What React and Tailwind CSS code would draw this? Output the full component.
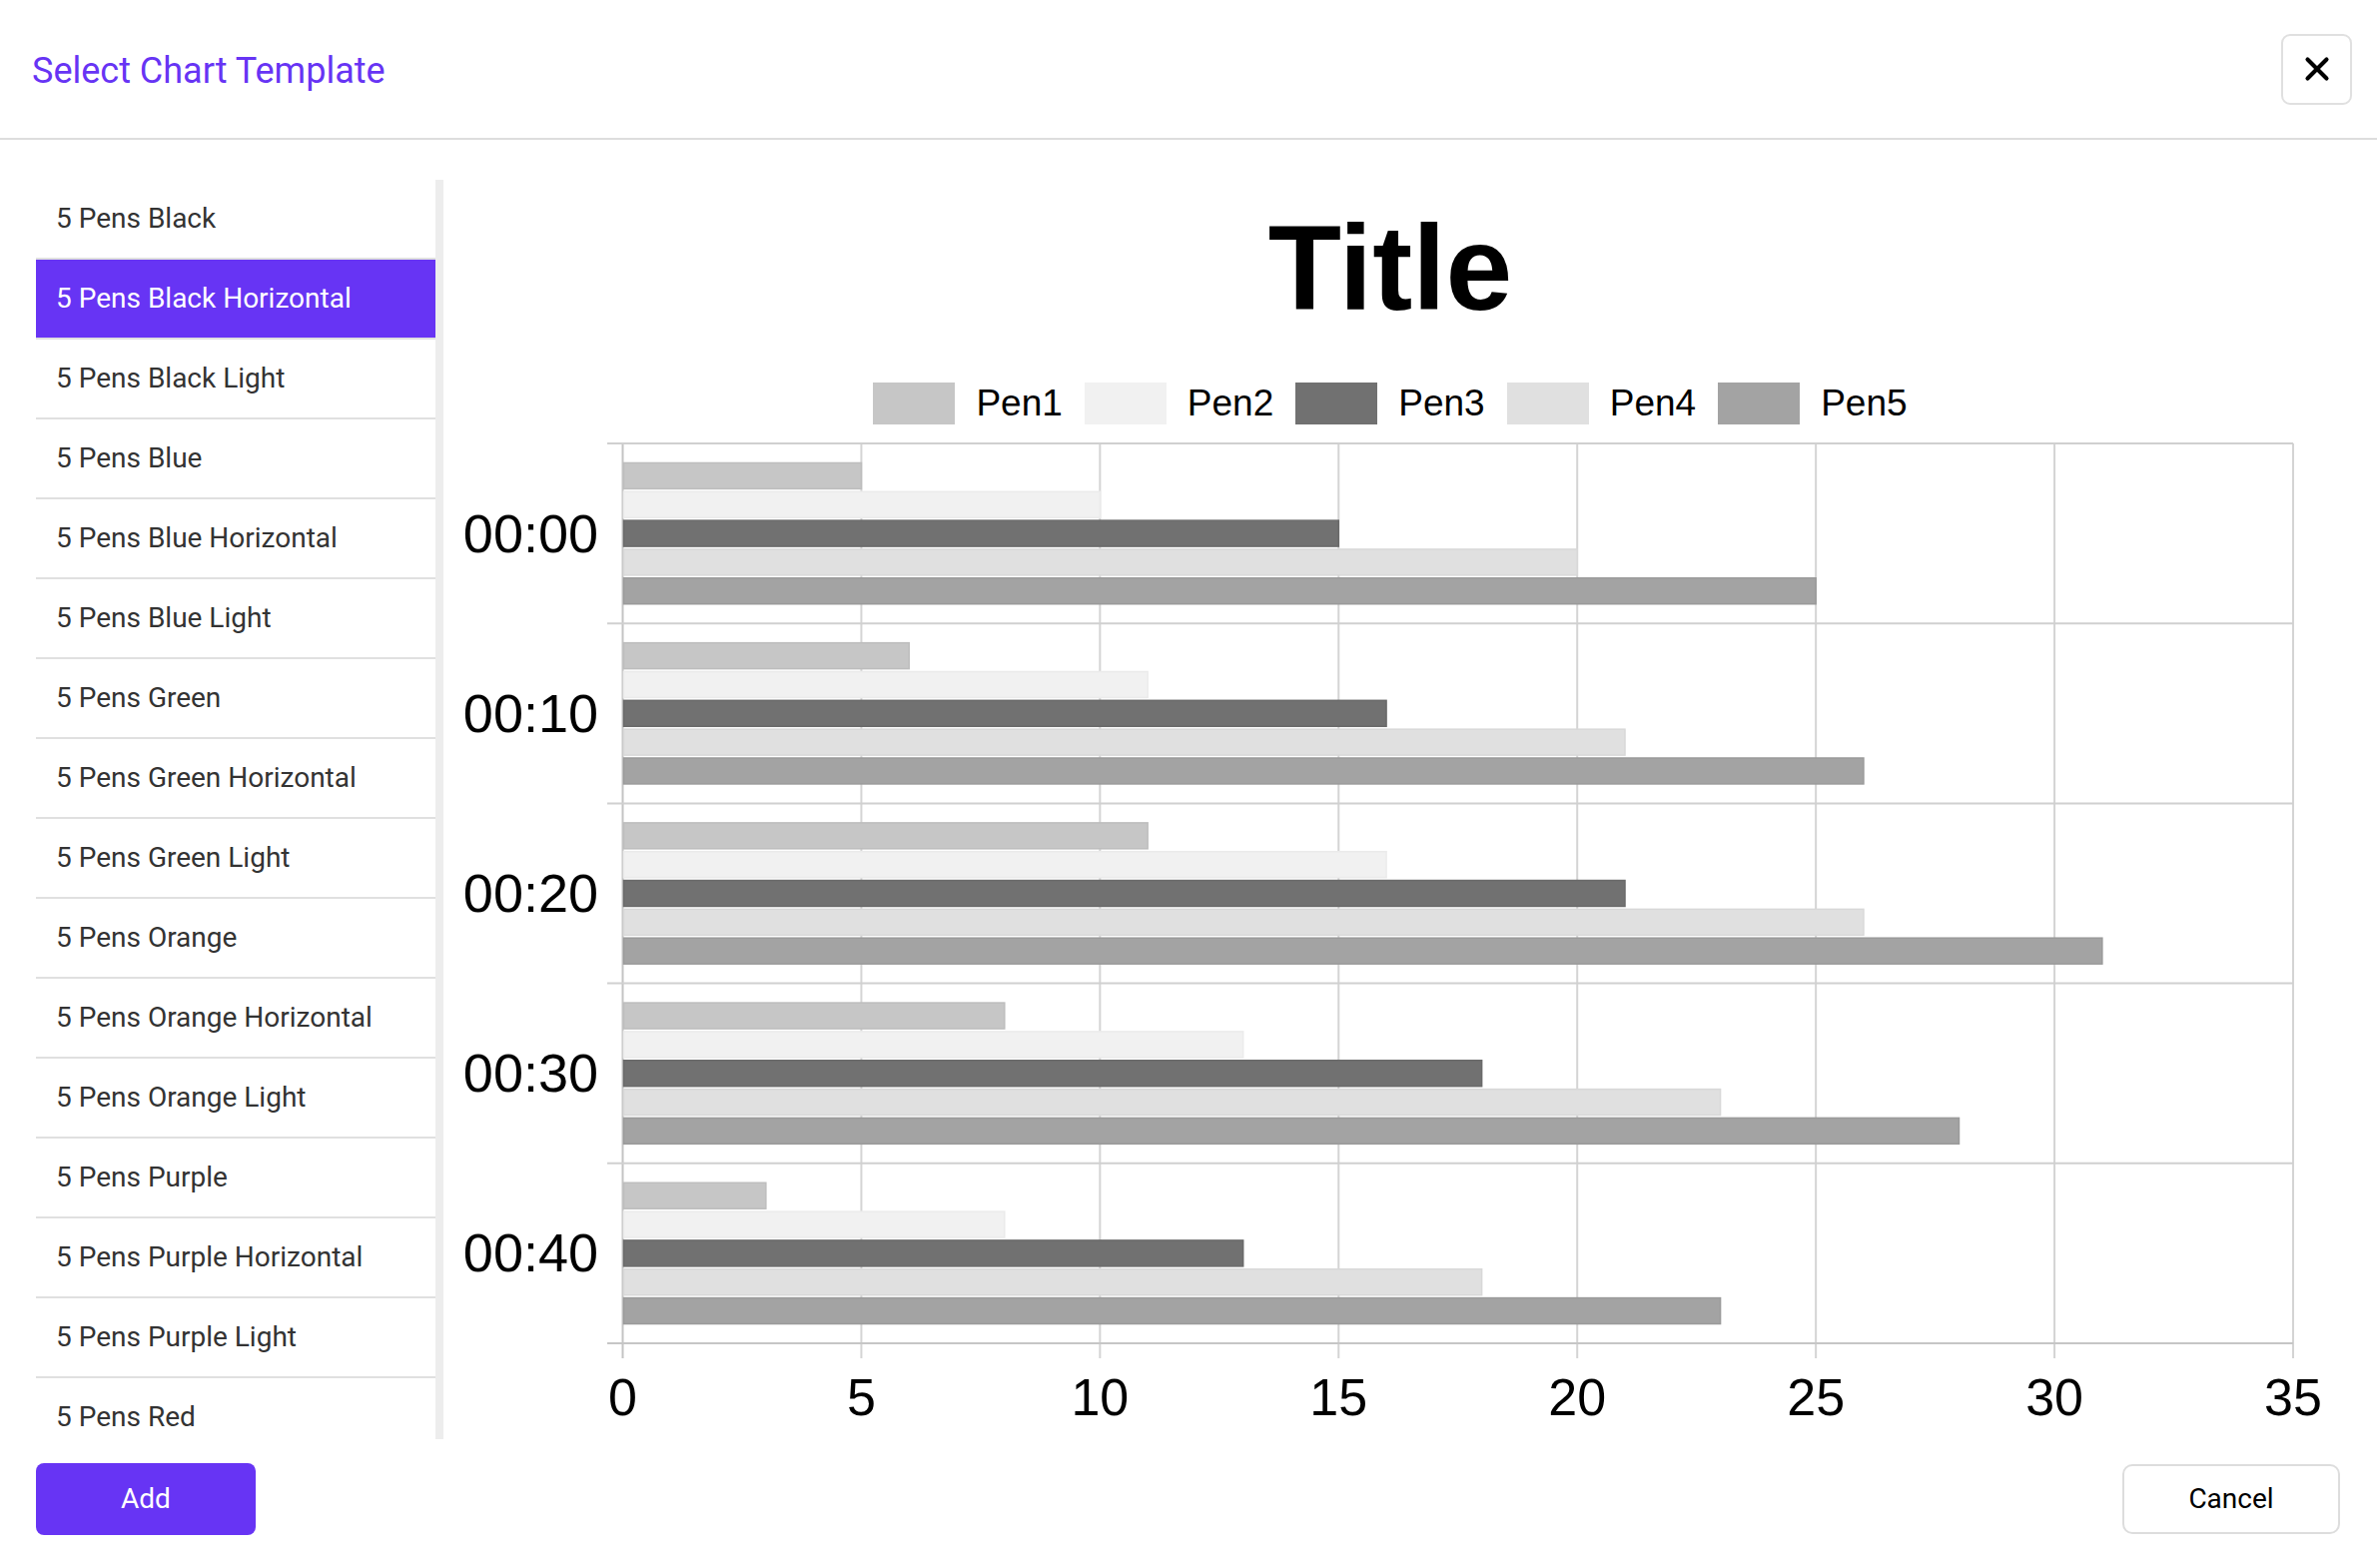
import { X } from "lucide-react";

const TEMPLATES = [
  "5 Pens Black",
  "5 Pens Black Horizontal",
  "5 Pens Black Light",
  "5 Pens Blue",
  "5 Pens Blue Horizontal",
  "5 Pens Blue Light",
  "5 Pens Green",
  "5 Pens Green Horizontal",
  "5 Pens Green Light",
  "5 Pens Orange",
  "5 Pens Orange Horizontal",
  "5 Pens Orange Light",
  "5 Pens Purple",
  "5 Pens Purple Horizontal",
  "5 Pens Purple Light",
  "5 Pens Red",
];

const PENS = [
  { label: "Pen1", fill: "#c6c6c6", stroke: "#bdbdbd" },
  { label: "Pen2", fill: "#f1f1f1", stroke: "#ebebeb" },
  { label: "Pen3", fill: "#717171", stroke: "#6a6a6a" },
  { label: "Pen4", fill: "#e0e0e0", stroke: "#d8d8d8" },
  { label: "Pen5", fill: "#a3a3a3", stroke: "#9a9a9a" },
];

const ROWS = [
  { time: "00:00", values: [5, 10, 15, 20, 25] },
  { time: "00:10", values: [6, 11, 16, 21, 26] },
  { time: "00:20", values: [11, 16, 21, 26, 31] },
  { time: "00:30", values: [8, 13, 18, 23, 28] },
  { time: "00:40", values: [3, 8, 13, 18, 23] },
];

// plot geometry in page pixels
const X0 = 623.5;
const X35 = 2296;
const Y0 = 444;
const Y1 = 1345;
const UNIT = (X35 - X0) / 35;
const CAT = (Y1 - Y0) / ROWS.length;

function BarChart() {
  const ticks = [0, 5, 10, 15, 20, 25, 30, 35];
  return (
    <svg width="1896" height="1000" viewBox="444 436 1896 1000" className="block">
      {ticks.map((t) => (
        <line key={t} x1={X0 + t * UNIT} x2={X0 + t * UNIT} y1={Y0} y2={1360} stroke={t === 0 ? "#c4c4c4" : "#d4d4d4"} strokeWidth="2" />
      ))}
      {ROWS.map((_, i) => (
        <line key={i} x1="608" x2={X35} y1={Y0 + i * CAT} y2={Y0 + i * CAT} stroke="#d0d0d0" strokeWidth="2" />
      ))}
      <line x1="608" x2={X35} y1={Y1} y2={Y1} stroke="#c6c6c6" strokeWidth="2" />
      {ROWS.map((row, i) => {
        const top = Y0 + i * CAT + CAT * 0.1;
        const slot = (CAT * 0.8) / 5;
        return (
          <g key={row.time}>
            {row.values.map((v, j) => (
              <rect
                key={j}
                x={X0 + 1}
                y={top + slot * j + slot * 0.05}
                width={v * UNIT - 1}
                height={slot * 0.9}
                fill={PENS[j].fill}
                stroke={PENS[j].stroke}
                strokeWidth="1.5"
              />
            ))}
            <text x="599" y={Y0 + i * CAT + CAT / 2 + 18.5} textAnchor="end" fontSize="54" fill="#000" fontFamily="'Liberation Sans', Arial, sans-serif">
              {row.time}
            </text>
          </g>
        );
      })}
      {ticks.map((t) => (
        <text key={t} x={X0 + t * UNIT} y="1417" textAnchor="middle" fontSize="52" fill="#000" fontFamily="'Liberation Sans', Arial, sans-serif">
          {t}
        </text>
      ))}
    </svg>
  );
}

export default function App() {
  const selected = "5 Pens Black Horizontal";
  return (
    <div className="w-[2380px] h-[1570px] bg-white flex flex-col font-['Roboto',sans-serif] overflow-hidden">
      <header className="h-[140px] flex items-center justify-between pl-[32px] pr-[25px] pt-[4px] border-b-2 border-[#dddddd] shrink-0">
        <h1 className="text-[36px] text-[#6734f4] leading-none">Select Chart Template</h1>
        <button type="button" className="w-[71px] h-[71px] -mt-[4px] rounded-[9px] border-2 border-[#e0e0e0] flex items-center justify-center text-black" aria-label="Close">
          <X size={38} strokeWidth={2.6} />
        </button>
      </header>

      <div className="flex pt-[40px] h-[1301px] shrink-0">
        <div className="flex pl-[36px] h-[1261px]">
          <ul className="w-[400px] h-full overflow-hidden">
            {TEMPLATES.map((name) => {
              const isActive = name === selected;
              return (
                <li
                  key={name}
                  className={`h-[80px] flex items-center pl-[20px] border-b-2 border-[#e0e0e0] text-[28px] ${isActive ? "bg-[#6734f4] text-white" : "text-[#333333]"}`}
                >
                  {name}
                </li>
              );
            })}
          </ul>
          <div className="w-[8px] h-full bg-[#ededed]" />
        </div>

        <div className="flex-1 h-[1261px] flex flex-col items-start font-['Liberation_Sans',Arial,sans-serif] text-black">
          <div className="w-[1896px] flex justify-center mt-[28px]">
            <h2 className="text-[120px] leading-[120px] font-bold">Title</h2>
          </div>
          <div className="w-[1896px] flex justify-center items-center gap-[22px] mt-[55px] h-[42px]">
            {PENS.map((p) => (
              <div key={p.label} className="flex items-center gap-[21px]">
                <span className="w-[82px] h-[42px]" style={{ backgroundColor: p.fill }} />
                <span className="text-[37px] leading-[42px]">{p.label}</span>
              </div>
            ))}
          </div>
          <div className="mt-[11px]">
            <BarChart />
          </div>
        </div>
      </div>

      <footer className="flex items-center justify-between pl-[36px] pr-[37px] pt-[24px]">
        <button type="button" className="w-[220px] h-[72px] rounded-[8px] bg-[#6734f4] text-white text-[28px]">
          Add
        </button>
        <button type="button" className="w-[218px] h-[70px] rounded-[10px] border-2 border-[#dddddd] text-black text-[28px]">
          Cancel
        </button>
      </footer>
    </div>
  );
}
